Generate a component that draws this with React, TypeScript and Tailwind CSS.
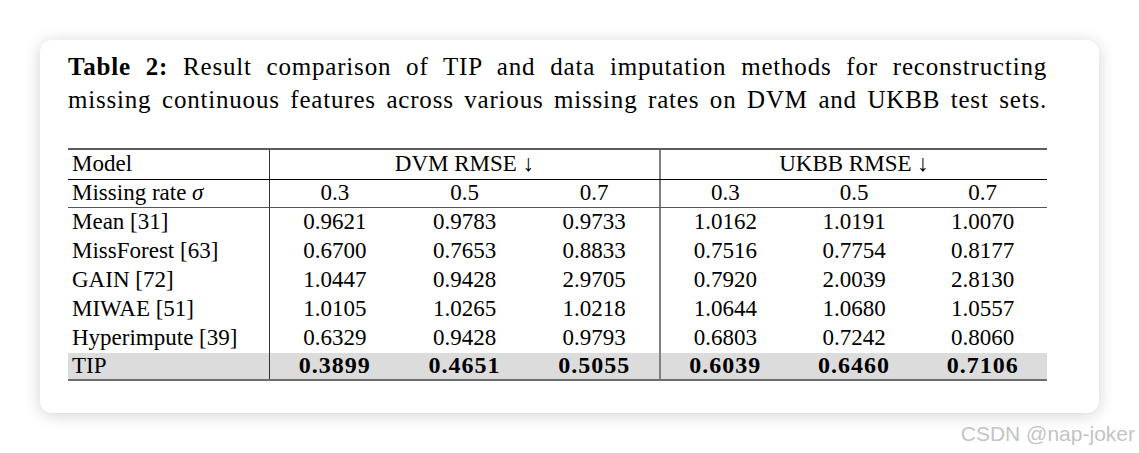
import React from "react";

interface Row {
  model: string;
  dvm: string[];
  ukbb: string[];
}

const rows: Row[] = [
  { model: "Mean [31]", dvm: ["0.9621", "0.9783", "0.9733"], ukbb: ["1.0162", "1.0191", "1.0070"] },
  { model: "MissForest [63]", dvm: ["0.6700", "0.7653", "0.8833"], ukbb: ["0.7516", "0.7754", "0.8177"] },
  { model: "GAIN [72]", dvm: ["1.0447", "0.9428", "2.9705"], ukbb: ["0.7920", "2.0039", "2.8130"] },
  { model: "MIWAE [51]", dvm: ["1.0105", "1.0265", "1.0218"], ukbb: ["1.0644", "1.0680", "1.0557"] },
  { model: "Hyperimpute [39]", dvm: ["0.6329", "0.9428", "0.9793"], ukbb: ["0.6803", "0.7242", "0.8060"] },
];

const tip: Row = { model: "TIP", dvm: ["0.3899", "0.4651", "0.5055"], ukbb: ["0.6039", "0.6460", "0.7106"] };

// one table line: model cell + DVM group + UKBB group
const TableRow = ({ row, bold, className }: { row: Row; bold?: boolean; className?: string }) => {
  const num = bold ? "font-bold text-[24px] tracking-[1px]" : "";
  return (
    <div className={`flex pb-[2px] ${className ?? ""}`}>
      <div className="w-[201px] pl-1 flex items-center">{row.model}</div>
      <div className="w-[390px] border-l border-[#333] flex -mb-[2px] pb-[2px]">
        {row.dvm.map((v, i) => (
          <div key={i} className={`flex-1 flex items-center justify-center ${num}`}>{v}</div>
        ))}
      </div>
      <div className="flex-1 border-l-2 border-[#808080] flex -mb-[2px] pb-[2px]">
        {row.ukbb.map((v, i) => (
          <div key={i} className={`flex-1 flex items-center justify-center ${num}`}>{v}</div>
        ))}
      </div>
    </div>
  );
};

export default function App() {
  return (
    <div className="w-[1139px] h-[453px] bg-white overflow-hidden" style={{ fontFamily: '"Liberation Serif", "DejaVu Serif", serif' }}>
      <div className="pt-10 px-10">
        <div className="h-[373px] bg-white rounded-xl shadow-[0_2px_16px_rgba(0,0,0,0.18)] pl-7 pr-[52px] pt-[11px] text-black">
          {/* caption */}
          <div className="text-[25px] leading-[32.5px] tracking-[0.8px]">
            <div className="text-justify [text-align-last:justify]">
              <span className="font-bold">Table 2:</span> Result comparison of TIP and data imputation methods for reconstructing
            </div>
            <div className="text-justify [text-align-last:justify]">
              missing continuous features across various missing rates on DVM and UKBB test sets.
            </div>
          </div>

          {/* table */}
          <div className="mt-[32px] border-t-2 border-[#5c5c5c] text-[23px] leading-none">
            <div className="flex h-[30px] border-b border-black">
              <div className="w-[201px] pl-1 pb-[3px] flex items-center">Model</div>
              <div className="w-[390px] border-l border-[#333] pb-[3px] flex items-center justify-center">DVM RMSE ↓</div>
              <div className="flex-1 border-l-2 border-[#808080] pb-[3px] flex items-center justify-center">UKBB RMSE ↓</div>
            </div>
            <div className="flex h-[28px] border-b border-[#555]">
              <div className="w-[201px] pl-1 pb-[2px] flex items-center">
                Missing rate&nbsp;<i>σ</i>
              </div>
              <div className="w-[390px] border-l border-[#333] pb-[2px] flex">
                <div className="flex-1 flex items-center justify-center">0.3</div>
                <div className="flex-1 flex items-center justify-center">0.5</div>
                <div className="flex-1 flex items-center justify-center">0.7</div>
              </div>
              <div className="flex-1 border-l-2 border-[#808080] pb-[2px] flex">
                <div className="flex-1 flex items-center justify-center">0.3</div>
                <div className="flex-1 flex items-center justify-center">0.5</div>
                <div className="flex-1 flex items-center justify-center">0.7</div>
              </div>
            </div>
            {rows.map((r) => (
              <TableRow key={r.model} row={r} className="h-[29px]" />
            ))}
            <TableRow row={tip} bold className="h-[28px] bg-[#dcdcdc] border-b-2 border-[#6e6e6e]" />
          </div>
        </div>
      </div>
      <div className="flex justify-end pr-1 mt-[9px]">
        <span className="text-[21px] leading-6 text-[#c4c4c4]" style={{ fontFamily: '"Liberation Sans", Arial, sans-serif' }}>
          CSDN @nap-joker
        </span>
      </div>
    </div>
  );
}
